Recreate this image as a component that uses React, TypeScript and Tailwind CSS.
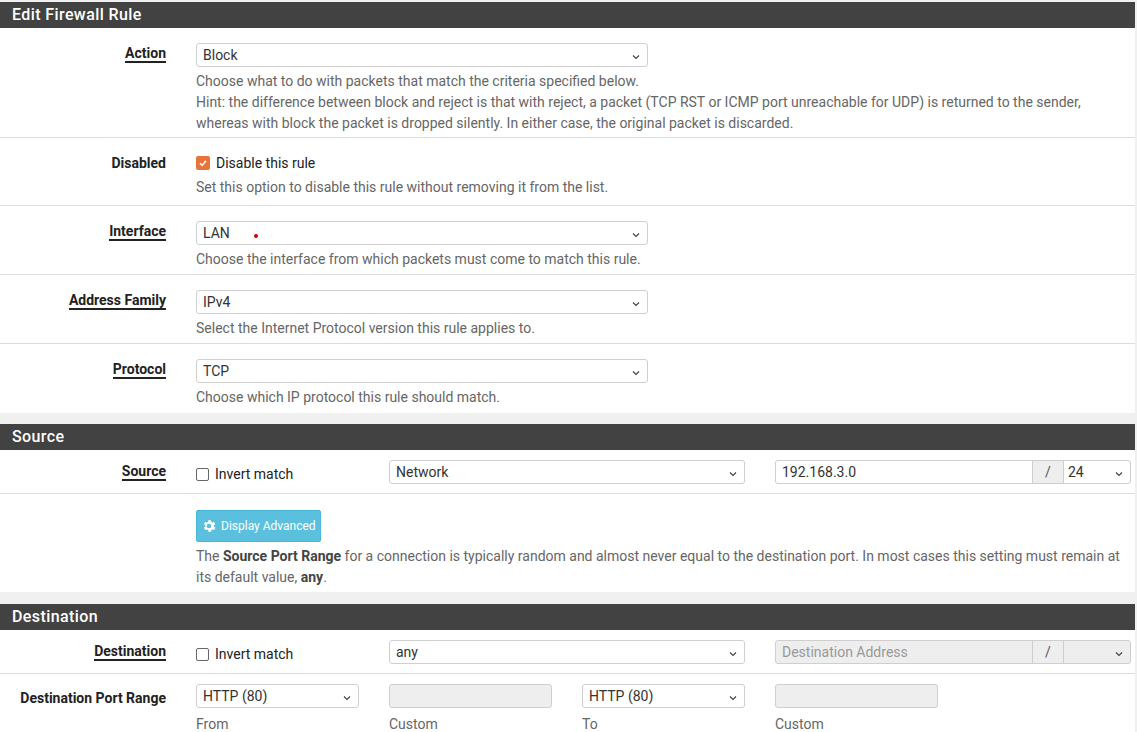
import React from "react";

const Chev = () => (
  <svg width="10" height="10" viewBox="0 0 10 10" className="absolute right-[6px] top-[8px]"><path d="M2 3.5 L5 6.5 L8 3.5" fill="none" stroke="#444" strokeWidth="1.2" /></svg>
);

const Select = ({ v, w, className = "", dis = false }: { v: string; w: string; className?: string; dis?: boolean }) => (
  <div className={`relative h-[24px] ${w} border border-[#cfcfcf] rounded-[3px] ${dis ? "bg-[#eee]" : "bg-white"} px-[6px] text-[14px] leading-[22px] text-[#333] ${className}`}>
    {v}
    <Chev />
  </div>
);

const Label = ({ t, u = true }: { t: string; u?: boolean }) => (
  <div className="w-[181px] shrink-0 pr-[15px] text-right">
    <span className={`font-bold text-[14px] text-[#222] ${u ? "border-b-2 border-[#222]" : ""}`}>{t}</span>
  </div>
);

const Help = ({ children }: { children: React.ReactNode }) => (
  <div className="text-[14px] leading-[21px] text-[#666] mt-[4px]">{children}</div>
);

const Header = ({ t }: { t: string }) => (
  <div className="h-[26px] bg-[#424242] text-white text-[16px] font-medium tracking-wide pl-[12px] leading-[26px]">{t}</div>
);

const Checkbox = ({ checked }: { checked?: boolean }) =>
  checked ? (
    <span className="w-[14px] h-[14px] bg-[#e8743b] rounded-[2px] flex items-center justify-center">
      <svg width="10" height="10" viewBox="0 0 10 10"><path d="M2 5.2 L4.2 7.4 L8 2.8" fill="none" stroke="white" strokeWidth="1.6" /></svg>
    </span>
  ) : (
    <span className="w-[13px] h-[13px] border border-[#666] rounded-[2px] bg-white" />
  );

export default function App() {
  return (
    <div className="w-[1137px] h-[732px] overflow-hidden bg-[#f0f0f0] pt-[2px] text-[14px]" style={{ fontFamily: "Roboto, 'Liberation Sans', sans-serif" }}>
      <div className="w-[1135px] bg-white">
        <Header t="Edit Firewall Rule" />
        <div className="flex pt-[15px] h-[110px] border-b border-[#ddd]">
          <Label t="Action" />
          <div className="pl-[15px]">
            <Select v="Block" w="w-[452px]" />
            <Help>
              Choose what to do with packets that match the criteria specified below.<br />
              Hint: the difference between block and reject is that with reject, a packet (TCP RST or ICMP port unreachable for UDP) is returned to the sender,<br />
              whereas with block the packet is dropped silently. In either case, the original packet is discarded.
            </Help>
          </div>
        </div>
        <div className="flex pt-[15px] h-[68px] border-b border-[#ddd]">
          <Label t="Disabled" u={false} />
          <div className="pl-[15px]">
            <div className="flex items-center gap-[6px] h-[20px] text-[14px] text-[#222]"><Checkbox checked />Disable this rule</div>
            <Help>Set this option to disable this rule without removing it from the list.</Help>
          </div>
        </div>
        {[
          ["Interface", "LAN", "Choose the interface from which packets must come to match this rule."],
          ["Address Family", "IPv4", "Select the Internet Protocol version this rule applies to."],
          ["Protocol", "TCP", "Choose which IP protocol this rule should match."],
        ].map(([l, v, h], i) => (
          <div key={l} className={`flex pt-[15px] h-[69px] ${i < 2 ? "border-b border-[#ddd]" : ""}`}>
            <Label t={l} />
            <div className="pl-[15px] relative">
              <Select v={v} w="w-[452px]" />
              {i === 0 && <span className="absolute left-[73px] top-[13px] w-[4px] h-[4px] rounded-full bg-[#d40000]" />}
              <Help>{h}</Help>
            </div>
          </div>
        ))}
      </div>

      <div className="w-[1135px] bg-white mt-[11px]">
        <Header t="Source" />
        <div className="flex items-center h-[44px] border-b border-[#ddd]">
          <Label t="Source" />
          <div className="pl-[15px] flex items-center">
            <div className="w-[193px] flex items-center gap-[6px] text-[#222] pt-[6px]"><Checkbox />Invert match</div>
            <Select v="Network" w="w-[356px]" />
            <div className="ml-[30px] flex h-[24px] w-[356px] border border-[#cfcfcf] rounded-[3px] bg-white text-[#333]">
              <div className="flex-1 px-[6px] leading-[22px]">192.168.3.0</div>
              <div className="w-[32px] bg-[#eee] border-x border-[#cfcfcf] text-center leading-[22px] text-[#555]">/</div>
              <div className="relative w-[66px] px-[4px] leading-[22px]">24<Chev /></div>
            </div>
          </div>
        </div>
        <div className="flex pt-[16px] h-[98px]">
          <div className="w-[181px]" />
          <div className="pl-[15px]">
            <div className="inline-flex items-center gap-[4px] h-[32px] px-[4px] bg-[#5bc0de] border border-[#46b8da] rounded-[2px] text-white text-[12px]">
              <svg width="16" height="16" viewBox="0 0 24 24" fill="white"><path d="M19.4 13a7.5 7.5 0 0 0 0-2l2.1-1.6-2-3.5-2.5 1a7 7 0 0 0-1.7-1L15 3.2h-4l-.4 2.7a7 7 0 0 0-1.7 1l-2.5-1-2 3.5L6.6 11a7.5 7.5 0 0 0 0 2l-2.1 1.6 2 3.5 2.5-1a7 7 0 0 0 1.7 1l.4 2.7h4l.4-2.7a7 7 0 0 0 1.7-1l2.5 1 2-3.5zM12 15.5a3.5 3.5 0 1 1 0-7 3.5 3.5 0 0 1 0 7z"/></svg>
              Display Advanced
            </div>
            <Help>
              The <b className="text-[#444]">Source Port Range</b> for a connection is typically random and almost never equal to the destination port. In most cases this setting must remain at<br />
              its default value, <b className="text-[#444]">any</b>.
            </Help>
          </div>
        </div>
      </div>

      <div className="w-[1135px] bg-white mt-[12px]">
        <Header t="Destination" />
        <div className="flex items-center h-[44px] border-b border-[#ddd]">
          <Label t="Destination" />
          <div className="pl-[15px] flex items-center">
            <div className="w-[193px] flex items-center gap-[6px] text-[#222] pt-[6px]"><Checkbox />Invert match</div>
            <Select v="any" w="w-[356px]" />
            <div className="ml-[30px] flex h-[24px] w-[356px] border border-[#cfcfcf] rounded-[3px] bg-[#eee] text-[#999]">
              <div className="flex-1 px-[6px] leading-[22px]">Destination Address</div>
              <div className="w-[32px] border-x border-[#cfcfcf] text-center leading-[22px] text-[#555]">/</div>
              <div className="relative w-[66px]"><Chev /></div>
            </div>
          </div>
        </div>
        <div className="flex pt-[10px] h-[60px]">
          <div className="w-[181px] shrink-0 pr-[15px] text-right pt-[4px]"><span className="font-bold text-[#222]">Destination Port Range</span></div>
          <div className="pl-[15px] grid grid-cols-[193px_193px_193px_193px]">
            <Select v="HTTP (80)" w="w-[163px]" />
            <div className="w-[163px] h-[24px] border border-[#cfcfcf] rounded-[3px] bg-[#eee]" />
            <Select v="HTTP (80)" w="w-[163px]" />
            <div className="w-[163px] h-[24px] border border-[#cfcfcf] rounded-[3px] bg-[#eee]" />
            {["From", "Custom", "To", "Custom"].map((t, i) => (
              <div key={i} className="text-[#666] mt-[6px]">{t}</div>
            ))}
          </div>
        </div>
      </div>
    </div>
  );
}
